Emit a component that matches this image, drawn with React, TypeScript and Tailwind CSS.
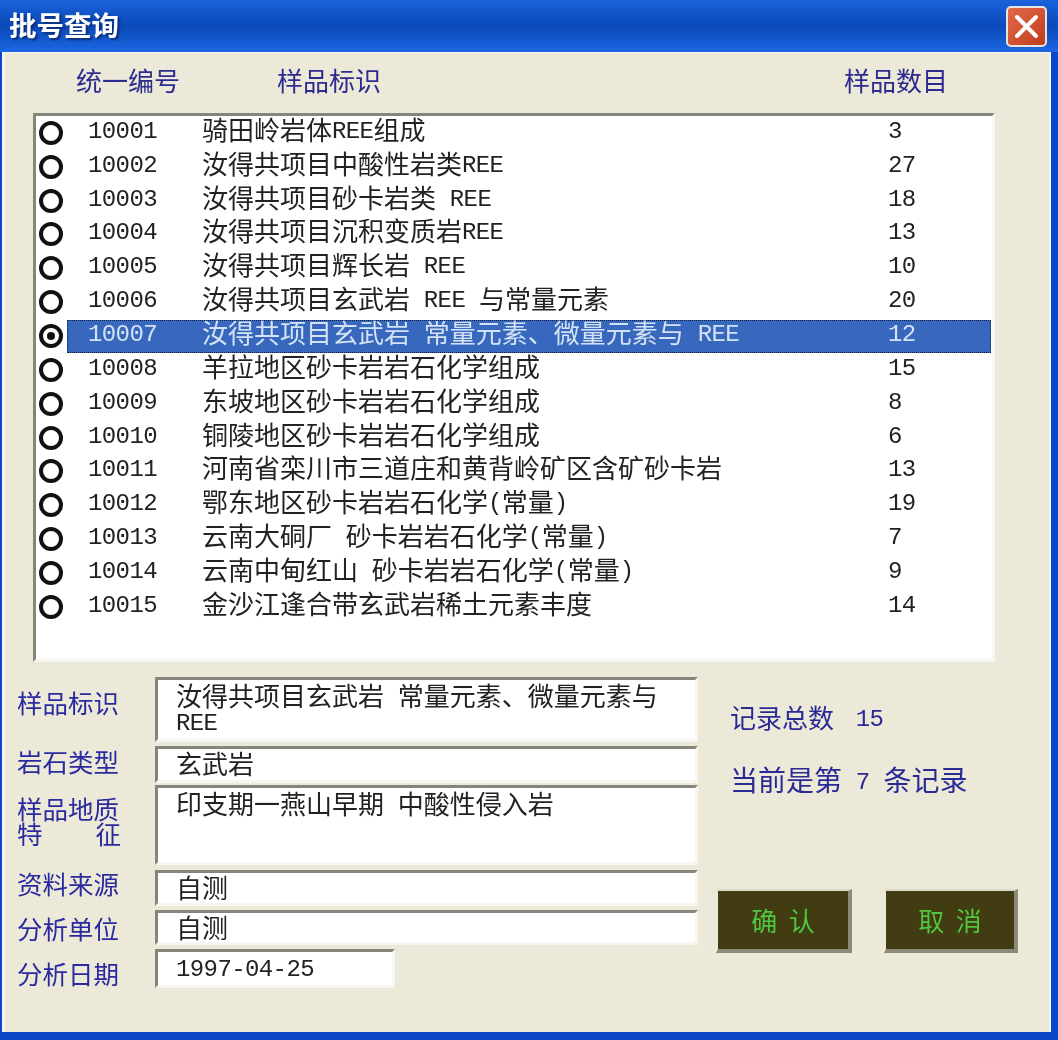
const ROWS = [
  ['10001', '骑田岭岩体REE组成', '3'],
  ['10002', '汝得共项目中酸性岩类REE', '27'],
  ['10003', '汝得共项目砂卡岩类 REE', '18'],
  ['10004', '汝得共项目沉积变质岩REE', '13'],
  ['10005', '汝得共项目辉长岩 REE', '10'],
  ['10006', '汝得共项目玄武岩 REE 与常量元素', '20'],
  ['10007', '汝得共项目玄武岩 常量元素、微量元素与 REE', '12'],
  ['10008', '羊拉地区砂卡岩岩石化学组成', '15'],
  ['10009', '东坡地区砂卡岩岩石化学组成', '8'],
  ['10010', '铜陵地区砂卡岩岩石化学组成', '6'],
  ['10011', '河南省栾川市三道庄和黄背岭矿区含矿砂卡岩', '13'],
  ['10012', '鄂东地区砂卡岩岩石化学(常量)', '19'],
  ['10013', '云南大硐厂 砂卡岩岩石化学(常量)', '7'],
  ['10014', '云南中甸红山 砂卡岩岩石化学(常量)', '9'],
  ['10015', '金沙江逢合带玄武岩稀土元素丰度', '14'],
];

const SELECTED = '10007';

const FIELDS = [
  { label: ['样品标识'], value: '汝得共项目玄武岩 常量元素、微量元素与 REE', box: 'h-[65px] w-[543px] pt-[2px]', labelPad: 'pt-[12px]', gap: 'mt-0' },
  { label: ['岩石类型'], value: '玄武岩', box: 'h-[37px] w-[543px] pt-[1px]', labelPad: 'pt-[2px]', gap: 'mt-[4px]' },
  { label: ['样品地质', '特征'], value: '印支期一燕山早期 中酸性侵入岩', box: 'h-[80px] w-[543px] pt-[2px]', labelPad: 'pt-[10px]', gap: 'mt-[2px]' },
  { label: ['资料来源'], value: '自测', box: 'h-[36px] w-[543px] pt-[1px]', labelPad: 'pt-0', gap: 'mt-[5px]' },
  { label: ['分析单位'], value: '自测', box: 'h-[35px] w-[543px] pt-[1px]', labelPad: 'pt-[5px]', gap: 'mt-[4px]' },
  { label: ['分析日期'], value: '1997-04-25', box: 'h-[39px] w-[240px] pt-[2px]', labelPad: 'pt-[11px]', gap: 'mt-[4px]' },
];

const LATIN = "font-['Liberation_Mono',monospace] text-[24px] tracking-[-0.6px] leading-[20px] whitespace-pre-wrap align-[2px]";

// 半角字符用等宽字体, 中文用 CJK 字体
function Txt({ text }: { text: string }) {
  return (
    <>
      {text.split(/([\x20-\x7e]+)/).map((part, i) =>
        /^[\x20-\x7e]+$/.test(part) ? (
          <span key={i} className={LATIN}>{part}</span>
        ) : (
          <span key={i}>{part}</span>
        ),
      )}
    </>
  );
}

function Radio({ checked }: { checked: boolean }) {
  return (
    <div className="ml-[3px] w-[24px] h-[24px] shrink-0 rounded-full border-[4px] border-[#111] bg-white flex items-center justify-center">
      {checked && <div className="w-[8px] h-[8px] rounded-full bg-[#111]" />}
    </div>
  );
}

export default function App() {
  return (
    <div className="w-[1058px] h-[1040px] flex flex-col overflow-hidden bg-[#0a48c8] blur-[0.4px] font-['Noto_Sans_CJK_SC',sans-serif] text-[26px] leading-[26px] text-[#222]">
      {/* 标题栏 */}
      <div className="h-[52px] shrink-0 flex items-center justify-between pl-[9px] pr-[11px] bg-gradient-to-b from-[#1a62dc] via-[#0a49b8] to-[#1c66e4]">
        <span className="pb-[5px] font-bold text-white text-[27.5px] [text-shadow:2px_2px_2px_#0b2f7c]">批号查询</span>
        <div className="w-[41px] h-[41px] rounded-[5px] border-2 border-[#e8e4e0] bg-gradient-to-br from-[#e2694a] to-[#bf3c1c] flex items-center justify-center">
          <svg width="25" height="25" viewBox="0 0 25 25">
            <path d="M3 3 L22 22 M22 3 L3 22" stroke="#fff" strokeWidth="4" strokeLinecap="round" />
          </svg>
        </div>
      </div>

      {/* 主体 */}
      <div className="h-[980px] ml-[2px] mr-[7px] flex flex-col bg-[#ece9d8] border-l-[3px] border-r-[2px] border-t border-[#f2f4f8]">
        {/* 表头 */}
        <div className="h-[60px] shrink-0 flex pl-[71px] pt-[14px] text-[#2b2b90]">
          <span className="w-[201px]">统一编号</span>
          <span className="w-[567px]">样品标识</span>
          <span>样品数目</span>
        </div>

        {/* 列表 */}
        <div className="ml-[28px] w-[962px] h-[549px] shrink-0 bg-white border-[3px] border-t-[#85857a] border-l-[#85857a] border-r-[#f7f6f0] border-b-[#f7f6f0]">
          {ROWS.map(([id, name, count]) => {
            const selected = id === SELECTED;
            return (
              <div key={id} className="h-[33.85px] flex items-center">
                <Radio checked={selected} />
                <div
                  className={
                    selected
                      ? 'ml-[4px] mr-[1px] flex-1 h-[33px] self-end flex items-center pb-[8px] border border-dotted border-[#101c40] bg-[#3768bd] text-[#d3e2f4]'
                      : 'ml-[4px] mr-[1px] flex-1 h-[33px] flex items-center pb-[8px] border border-transparent'
                  }
                >
                  <span className="w-[134px] pl-[20px] shrink-0"><Txt text={id} /></span>
                  <span className="w-[686px] shrink-0 whitespace-nowrap"><Txt text={name} /></span>
                  <span><Txt text={count} /></span>
                </div>
              </div>
            );
          })}
        </div>

        {/* 明细 */}
        <div className="mt-[15px] flex">
          <div className="w-[693px] shrink-0 pl-[12px]">
            {FIELDS.map((f) => (
              <div key={f.label[0]} className={`flex ${f.gap}`}>
                <div className={`w-[138px] shrink-0 text-[25.5px] text-[#2a2aa0] ${f.labelPad}`}>
                  {f.label.map((line) => (
                    <div key={line} className="leading-[25px]">
                      {line === '特征' ? (
                        <span className="flex justify-between w-[104px]">
                          <span>特</span>
                          <span>征</span>
                        </span>
                      ) : (
                        line
                      )}
                    </div>
                  ))}
                </div>
                <div className={`${f.box} pl-[18px] pr-[10px] bg-white border-[3px] border-t-[#85857a] border-l-[#85857a] border-r-[#f7f6f0] border-b-[#f7f6f0]`}>
                  <Txt text={f.value} />
                </div>
              </div>
            ))}
          </div>

          {/* 记录信息和按钮 */}
          <div className="flex-1 pl-[18px]">
            <div className="pl-[14px] mt-[27px] text-[#2a2a96]">
              记录总数<span className={`${LATIN} ml-[8px]`}> 15</span>
            </div>
            <div className="pl-[14px] mt-[36px] text-[28px] text-[#2a2a96]">
              当前是第<span className={LATIN}> 7 </span>条记录
            </div>
            <div className="mt-[96px] flex gap-[32px]">
              <button className="w-[136px] h-[64px] flex items-center justify-center whitespace-pre bg-[#423c12] text-[#4fc540] text-[26px] border-t-2 border-l-2 border-r-[4px] border-b-[4px] border-t-[#ddd9c8] border-l-[#ece9d8] border-r-[#8c8a78] border-b-[#8c8a78]">
                确  认
              </button>
              <button className="w-[134px] h-[64px] flex items-center justify-center whitespace-pre bg-[#423c12] text-[#4fc540] text-[26px] border-t-2 border-l-2 border-r-[4px] border-b-[4px] border-t-[#ddd9c8] border-l-[#ece9d8] border-r-[#8c8a78] border-b-[#8c8a78]">
                取  消
              </button>
            </div>
          </div>
        </div>
      </div>
    </div>
  );
}
